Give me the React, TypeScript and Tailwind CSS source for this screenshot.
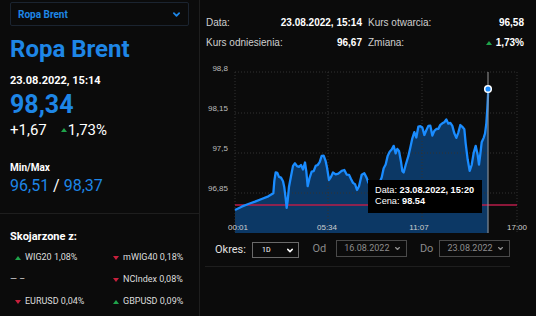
import React from "react";

const raw: [number, number][] = [
  [120, 465], [140, 455], [160, 447], [180, 440], [200, 432], [220, 424], [235, 415],
  [238, 380], [242, 352], [247, 350], [252, 368], [258, 368], [264, 375], [268, 400], [272, 430], [275, 455],
  [278, 440], [282, 395], [288, 360], [294, 335], [300, 325], [306, 330], [312, 338], [318, 330], [324, 340],
  [330, 325], [334, 350], [338, 390], [344, 370], [350, 350], [356, 345], [362, 335], [368, 330], [374, 318],
  [380, 305], [386, 302], [392, 315], [396, 340], [402, 375], [408, 362], [414, 355], [422, 358], [430, 352],
  [440, 350], [448, 345], [455, 355], [462, 362], [468, 372], [474, 380], [480, 390], [486, 405], [492, 390],
  [500, 362], [508, 355], [515, 365], [520, 385], [530, 395], [545, 400], [560, 370], [566, 340], [572, 325],
  [578, 305], [584, 290], [590, 280], [596, 275], [602, 295], [607, 278], [612, 290], [618, 320], [622, 345],
  [626, 355], [632, 330], [640, 300], [646, 280], [652, 250], [658, 228], [664, 250], [670, 215], [676, 210],
  [682, 220], [688, 240], [694, 222], [700, 215], [706, 212], [712, 238], [718, 230], [724, 222], [730, 218],
  [736, 212], [742, 205], [748, 198], [754, 196], [760, 206], [766, 200], [772, 215], [778, 235], [784, 245],
  [790, 235], [796, 210], [802, 212], [808, 225], [812, 265], [818, 310], [824, 350], [830, 330], [836, 290],
  [842, 275], [848, 300], [852, 325], [856, 300], [860, 262], [866, 245], [870, 238], [874, 205], [877, 160],
  [880, 102],
];

// zoomed coords -> page coords, with a little tick noise after the flat start
const pts = raw.map(([x, y], i) => {
  const n = i > 6 && i < raw.length - 3 ? (i % 3 === 0 ? 1.2 : i % 3 === 1 ? -0.8 : 0) : 0;
  return [+(195 + x / 3).toFixed(2), +(55 + y / 3 + n).toFixed(2)];
});
const line = pts.map((p) => p.join(",")).join(" ");
const area = `${line} ${pts[pts.length - 1][0]},233 ${pts[0][0]},233`;

function Up() {
  return (
    <svg width="6" height="4" viewBox="0 0 6 4" className="shrink-0">
      <polygon points="0,4 6,4 3,0" fill="#1fa34a" />
    </svg>
  );
}

function Down() {
  return (
    <svg width="6" height="4" viewBox="0 0 6 4" className="shrink-0">
      <polygon points="0,0 6,0 3,4" fill="#c8203c" />
    </svg>
  );
}

function Chevron({ color, w = 7 }: { color: string; w?: number }) {
  return (
    <svg width={w} height="5" viewBox="0 0 8 5" fill="none">
      <path d="M1 1l3 3 3-3" stroke={color} strokeWidth="2" strokeLinecap="round" strokeLinejoin="round" />
    </svg>
  );
}

function Related({ name, val, up }: { name: string; val: string; up: boolean }) {
  return (
    <div className="flex items-center gap-[4px] h-[22px]">
      {up ? <Up /> : <Down />}
      <span>
        {name} {val}
      </span>
    </div>
  );
}

export default function App() {
  return (
    <div className="w-[536px] h-[316px] bg-[#0b0b0b] flex overflow-hidden text-white">
      {/* left column */}
      <div className="w-[200px] h-full border-r border-[#1e1e1e] flex flex-col font-['Roboto',sans-serif]">
        <div className="px-[10px] pt-[2px]">
          <div className="h-[24px] border border-[#1b2430] rounded-[2px] flex items-center justify-between pl-[7px] pr-[8px]">
            <span className="text-[10px] font-bold text-[#1e86e6]">Ropa Brent</span>
            <Chevron color="#1e86e6" />
          </div>
          <div className="mt-[9px] text-[24px] leading-[28px] font-bold text-[#1e86e6]">Ropa Brent</div>
          <div className="mt-[11px] text-[11px] leading-[14px] font-bold">23.08.2022, 15:14</div>
          <div className="mt-[3px] text-[25px] leading-[28px] font-bold text-[#1e86e6]">98,34</div>
          <div className="mt-[2px] flex items-center text-[15px] leading-[18px]">
            <span>+1,67</span>
            <span className="ml-[14px] mr-[1px] mb-[1px]">
              <Up />
            </span>
            <span>1,73%</span>
          </div>
          <div className="mt-[23px] text-[10px] leading-[12px] font-bold">Min/Max</div>
          <div className="mt-[2px] text-[16px] leading-[20px] text-[#1e86e6]">
            96,51 <span className="text-white">/</span> 98,37
          </div>
        </div>
        <div className="mt-[17px] border-t border-[#1e1e1e] px-[10px] pt-[16px]">
          <div className="text-[11px] leading-[14px] font-bold">Skojarzone z:</div>
          <div className="mt-[3px] pl-[5px] grid grid-cols-[98px_1fr] text-[9px] text-[#dddddd]">
            <Related name="WIG20" val="1,08%" up />
            <Related name="mWIG40" val="0,18%" up={false} />
            <div className="flex items-center h-[22px] ml-[-5px]">— –</div>
            <Related name="NCIndex" val="0,08%" up={false} />
            <Related name="EURUSD" val="0,04%" up={false} />
            <Related name="GBPUSD" val="0,09%" up />
          </div>
        </div>
      </div>

      {/* right column */}
      <div className="flex-1 flex flex-col">
        <div className="pt-[13px] px-[6px] w-[330px] grid grid-cols-2 gap-x-[6px] text-[10px] leading-[20px] text-[#cfcfcf] font-['Liberation_Sans',Arial,sans-serif]">
          <div className="flex justify-between">
            <span>Data:</span>
            <span className="font-bold text-white">23.08.2022, 15:14</span>
          </div>
          <div className="flex justify-between">
            <span>Kurs otwarcia:</span>
            <span className="font-bold text-white">96,58</span>
          </div>
          <div className="flex justify-between">
            <span>Kurs odniesienia:</span>
            <span className="font-bold text-white">96,67</span>
          </div>
          <div className="flex justify-between">
            <span>Zmiana:</span>
            <span className="flex items-center gap-[4px] font-bold text-white">
              <Up /> 1,73%
            </span>
          </div>
        </div>

        <div className="relative h-[184px] w-[336px]">
          <svg width="336" height="184" viewBox="200 53 336 184" className="block font-['Liberation_Sans',Arial,sans-serif]">
            <polygon points={area} fill="#0c3865" />
            {[72, 113, 153, 193].map((y) => (
              <line key={y} x1="235" x2="517" y1={y} y2={y} stroke="#333" strokeWidth="1" strokeDasharray="1 2" />
            ))}
            {[235, 328, 422, 517].map((x) => (
              <line key={x} x1={x} x2={x} y1="72" y2="233" stroke="#333" strokeWidth="1" strokeDasharray="1 2" />
            ))}
            {[
              ["98,8", 71],
              ["98,15", 111],
              ["97,5", 151],
              ["96,85", 191],
            ].map(([t, y]) => (
              <text key={t} x="228" y={y} fontSize="8" fill="#bdbdbd" textAnchor="end">
                {t}
              </text>
            ))}
            <line x1="235" x2="517" y1="205" y2="205" stroke="#b81d4a" strokeWidth="1.3" />
            <polyline points={line} fill="none" stroke="#1a8cff" strokeWidth="2.3" strokeLinejoin="round" />
            <line x1="488" x2="488" y1="72" y2="233" stroke="#9a9a9a" strokeWidth="1" />
            <circle cx="488" cy="89" r="3.3" fill="#1a8cff" stroke="#ffffff" strokeWidth="1.5" />
            {[
              ["00:01", 238],
              ["05:34", 327],
              ["11:07", 419],
              ["17:00", 517],
            ].map(([t, x]) => (
              <text key={t} x={x} y="230" fontSize="8" fill="#cfcfcf" textAnchor="middle">
                {t}
              </text>
            ))}
          </svg>
          <div className="absolute left-[168px] top-[127px] w-[114px] h-[33px] bg-black px-[7px] pt-[5px] text-[9.2px] leading-[11px] text-white font-['Liberation_Sans',Arial,sans-serif]">
            <div>
              Data: <b>23.08.2022, 15:20</b>
            </div>
            <div>
              Cena: <b>98.54</b>
            </div>
          </div>
        </div>

        <div className="mt-[5px] mx-[5px] w-[305px] pb-[8px] border-b border-[#1e1e1e] flex items-center h-[16px] box-content font-['Roboto',sans-serif]">
          <span className="ml-[10px] text-[11px] text-[#e0e0e0]">Okres:</span>
          <div className="ml-[6px] w-[50px] h-[16px] border border-[#6a6a6a] flex items-center justify-between pl-[9px] pr-[5px]">
            <span className="text-[7px] text-white">1D</span>
            <Chevron color="#ffffff" w={6} />
          </div>
          <span className="ml-[13px] text-[11px] text-[#8a8a8a] self-start leading-[13px]">Od</span>
          <div className="ml-[10px] w-[75px] h-[17px] border border-[#4a4a4a] flex items-center justify-between pl-[7px] pr-[6px] self-start -mt-[2px]">
            <span className="text-[9px] text-[#8d8d8d]">16.08.2022</span>
            <Chevron color="#8d8d8d" w={5} />
          </div>
          <span className="ml-[13px] text-[11px] text-[#8a8a8a] self-start leading-[13px]">Do</span>
          <div className="ml-[6px] w-[75px] h-[17px] border border-[#4a4a4a] flex items-center justify-between pl-[7px] pr-[6px] self-start -mt-[2px]">
            <span className="text-[9px] text-[#8d8d8d]">23.08.2022</span>
            <Chevron color="#8d8d8d" w={5} />
          </div>
        </div>
      </div>
    </div>
  );
}
